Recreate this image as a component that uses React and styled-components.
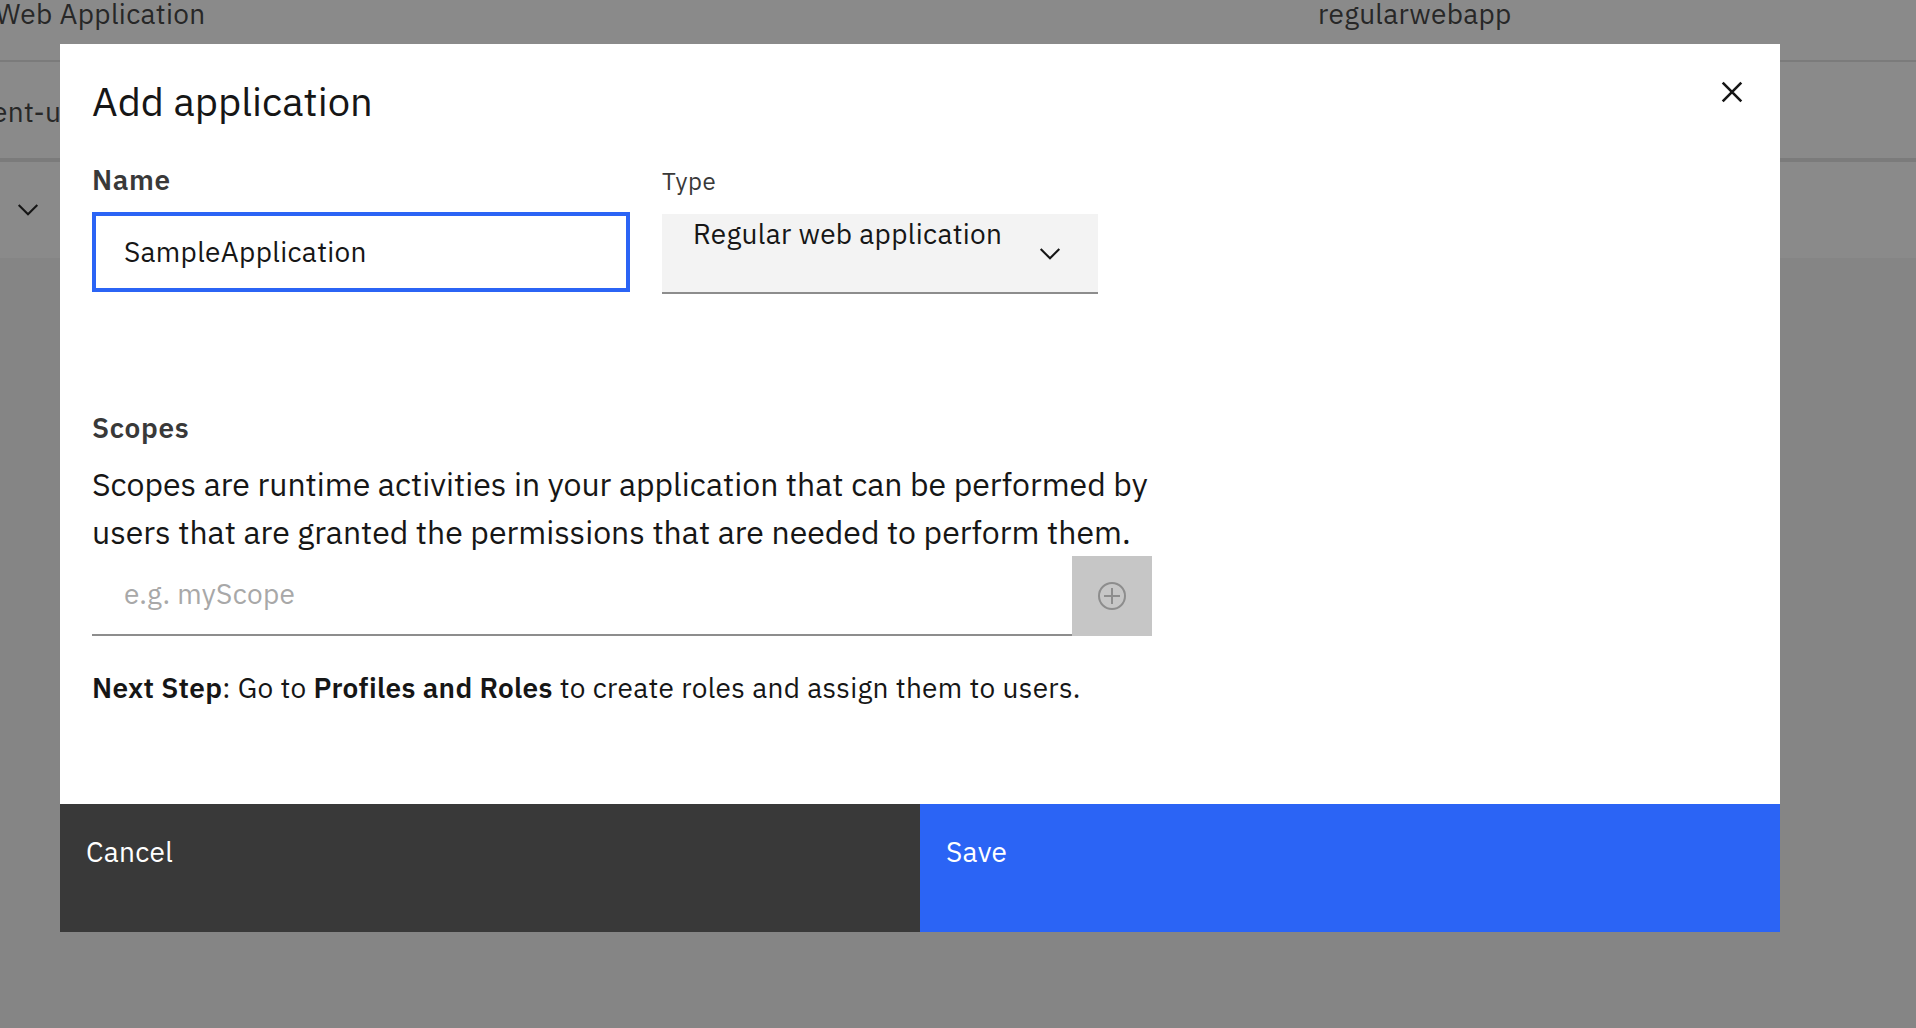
import React from 'react';
import styled, { createGlobalStyle } from 'styled-components';

const GlobalStyle = createGlobalStyle`
  *, *::before, *::after { box-sizing: border-box; }
  html, body { margin: 0; padding: 0; }
  body {
    background: #f4f4f4;
    color: #161616;
    font-family: "IBM Plex Sans", Roboto, "Liberation Sans", sans-serif;
    font-size: 28px;
    line-height: 36px;
    letter-spacing: 0.32px;
    overflow: hidden;
  }
  input, button { font: inherit; color: inherit; letter-spacing: inherit; border: 0; margin: 0; border-radius: 0; }
`;

const Page = styled.div`
  height: 1028px;
  overflow: hidden;
`;

const TableRow = styled.div`
  display: flex;
  align-items: flex-start;
  height: ${(p) => p.$height}px;
  padding-top: ${(p) => p.$top || 0}px;
  border-bottom: ${(p) => p.$rule || 0}px solid #e0e0e0;
  background: #fff;
  color: #393939;
  white-space: nowrap;
`;

const Cell = styled.div`
  flex: none;
  width: ${(p) => p.$width}px;
  margin-top: ${(p) => p.$lift || 0}px;
  text-indent: ${(p) => p.$indent || 0}px;
`;

const Chevron = styled.svg`
  display: block;
  flex: none;
  width: 22px;
  height: 14px;
  fill: none;
  stroke: #161616;
  stroke-width: 2.1;
`;

const Overlay = styled.div`
  position: fixed;
  inset: 0;
  display: flex;
  align-items: flex-start;
  padding: 44px 0 0 60px;
  background: rgba(22, 22, 22, 0.5);
`;

const Modal = styled.section`
  display: flex;
  flex-direction: column;
  width: 1720px;
  height: 888px;
  background: #fff;
`;

const Header = styled.header`
  display: flex;
  justify-content: space-between;
  align-items: flex-start;
  padding: 31px 36px 0 32px;
`;

const Title = styled.h2`
  margin: 0;
  font-size: 40px;
  line-height: 52px;
  font-weight: 400;
  letter-spacing: 0;
`;

const CloseButton = styled.button`
  display: block;
  padding: 5px 0 0;
  width: 24px;
  height: 29px;
  background: transparent;

  svg {
    display: block;
    stroke: #161616;
    stroke-width: 2.6;
  }
`;

const Body = styled.div`
  flex: 1;
  padding: 35px 32px 0;
`;

const Fields = styled.div`
  display: flex;
  align-items: flex-start;
  gap: 32px;
`;

const Field = styled.div`
  display: flex;
  flex-direction: column;
  gap: ${(p) => p.$gap}px;
  width: ${(p) => p.$width}px;
  padding-top: ${(p) => p.$top || 0}px;
`;

const Label = styled.label`
  display: block;
  color: #393939;
  font-size: ${(p) => (p.$small ? 24 : 28)}px;
  font-weight: ${(p) => (p.$small ? 400 : 600)};
  letter-spacing: 0.64px;
`;

const NameInput = styled.input`
  display: block;
  width: 100%;
  height: 80px;
  padding: 0 32px 2px;
  background: #fff;
  outline: 4px solid #2b64f5;
  outline-offset: -4px;
`;

const Select = styled.div`
  display: flex;
  justify-content: space-between;
  height: 80px;
  padding: 2px 37px 0 31px;
  background: #f3f3f3;
  border-bottom: 2px solid #8d8d8d;

  ${Chevron} { margin-top: 31px; }
`;

const Scopes = styled.div`
  width: 1060px;
  margin-top: 116px;
`;

const Description = styled.p`
  margin: 14px 0 0;
  font-size: 32px;
  line-height: 48px;
  letter-spacing: 0;
  white-space: nowrap;
`;

const ScopeEntry = styled.div`
  display: flex;
`;

const ScopeInput = styled.input`
  flex: 1;
  height: 80px;
  padding: 0 32px 4px;
  background: transparent;
  border-bottom: 2px solid #8d8d8d;
  outline: none;

  &::placeholder { color: #a8a8a8; opacity: 1; }
`;

const AddButton = styled.button`
  display: grid;
  place-items: center;
  width: 80px;
  height: 80px;
  padding: 0;
  background: #c6c6c6;

  svg { display: block; fill: none; stroke: #8d8d8d; stroke-width: 2; }
`;

const NextStep = styled.p`
  margin: 34px 0 0;
  white-space: nowrap;
`;

const Strong = styled.strong`
  font-weight: 600;
`;

const Footer = styled.footer`
  display: grid;
  grid-template-columns: 1fr 1fr;
  height: 128px;
`;

const FooterButton = styled.button`
  display: flex;
  align-items: flex-start;
  padding: 30px 26px;
  background: ${(p) => (p.$primary ? '#2b64f5' : '#393939')};
  color: #fff;
`;

function ChevronIcon() {
  return (
    <Chevron viewBox="0 0 22 14" aria-hidden="true">
      <path d="M1.7 2 L11 11.3 L20.3 2" />
    </Chevron>
  );
}

export default function App() {
  return (
    <>
      <GlobalStyle />
      <Page>
        <TableRow $height={62} $rule={2}>
          <Cell $width={1318} $lift={-4} $indent={-4.5}>Web Application</Cell>
          <Cell $width={598} $lift={-4}>regularwebapp</Cell>
        </TableRow>
        <TableRow $height={100} $top={32} $rule={4}>
          <Cell $width={1318} $indent={-8}>ent-u</Cell>
        </TableRow>
        <TableRow $height={96} $top={41}>
          <Cell $width={17} />
          <ChevronIcon />
        </TableRow>
      </Page>
      <Overlay>
        <Modal role="dialog" aria-labelledby="dialog-title">
          <Header>
            <Title id="dialog-title">Add application</Title>
            <CloseButton aria-label="Close">
              <svg width="24" height="24" viewBox="0 0 24 24">
                <path d="M2.7 2.7 L21.3 21.3 M21.3 2.7 L2.7 21.3" />
              </svg>
            </CloseButton>
          </Header>
          <Body>
            <Fields>
              <Field $width={538} $gap={14}>
                <Label htmlFor="name">Name</Label>
                <NameInput id="name" defaultValue="SampleApplication" />
              </Field>
              <Field $width={436} $gap={15} $top={1}>
                <Label $small>Type</Label>
                <Select>
                  Regular web application
                  <ChevronIcon />
                </Select>
              </Field>
            </Fields>
            <Scopes>
              <Label htmlFor="scope">Scopes</Label>
              <Description>
                Scopes are runtime activities in your application that can be performed by
                <br />
                users that are granted the permissions that are needed to perform them.
              </Description>
              <ScopeEntry>
                <ScopeInput id="scope" placeholder="e.g. myScope" />
                <AddButton aria-label="Add scope">
                  <svg width="28" height="28" viewBox="0 0 28 28">
                    <circle cx="14" cy="14" r="13" />
                    <path d="M14 6 V22 M6 14 H22" />
                  </svg>
                </AddButton>
              </ScopeEntry>
              <NextStep>
                <Strong>Next Step</Strong>: Go to <Strong>Profiles and Roles</Strong> to create roles and assign them to users.
              </NextStep>
            </Scopes>
          </Body>
          <Footer>
            <FooterButton>Cancel</FooterButton>
            <FooterButton $primary>Save</FooterButton>
          </Footer>
        </Modal>
      </Overlay>
    </>
  );
}
